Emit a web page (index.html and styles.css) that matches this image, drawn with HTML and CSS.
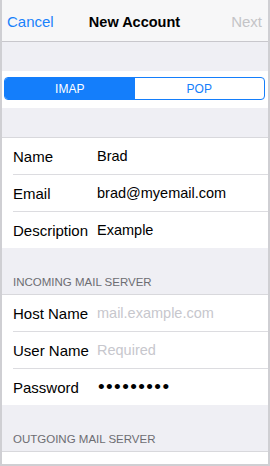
FILE: index.html
```html
<!DOCTYPE html>
<html lang="en-US">
<head>
	<meta charset="utf-8">
	<meta name="viewport" content="width=device-width, initial-scale=1.0">
	<link rel="stylesheet" href="styles.css">
</head>
<body>
	<div class="screen">
		<div class="navbar">
			<span class="nav-btn cancel">Cancel</span>
			<span class="nav-title">New Account</span>
			<span class="nav-btn next">Next</span>
		</div>

		<div class="spacer"></div>
		<div class="seg-band">
			<div class="segmented">
				<span class="seg active">IMAP</span>
				<span class="seg">POP</span>
			</div>
		</div>
		<div class="spacer"></div>

		<div class="group">
			<div class="row"><span class="label">Name</span><span class="value">Brad</span></div>
			<div class="row"><span class="label">Email</span><span class="value">brad@myemail.com</span></div>
			<div class="row"><span class="label">Description</span><span class="value">Example</span></div>
		</div>

		<div class="header">Incoming Mail Server</div>
		<div class="group">
			<div class="row"><span class="label">Host Name</span><span class="value placeholder">mail.example.com</span></div>
			<div class="row"><span class="label">User Name</span><span class="value placeholder">Required</span></div>
			<div class="row"><span class="label">Password</span><span class="value dots">&bull;&bull;&bull;&bull;&bull;&bull;&bull;&bull;&bull;</span></div>
		</div>

		<div class="header">Outgoing Mail Server</div>
		<div class="group">
			<div class="row"></div>
		</div>
	</div>
</body>
</html>
```

FILE: styles.css
```css
html, body {
	margin: 0;
	padding: 0;
}
body {
	font-family: "Liberation Sans", Arial, sans-serif;
	background: #fff;
}
.screen {
	width: 270px;
	height: 466px;
	box-sizing: border-box;
	border: 2px solid #cfcfd3;
	border-top: 0;
	background: #efeff4;
	overflow: hidden;
}
.navbar {
	height: 39px;
	background: #f7f7f8;
	border-bottom: 1px solid #c8c7cc;
	display: grid;
	grid-template-columns: 1fr auto 1fr;
	align-items: center;
	padding: 2px 6px 0 5px;
	font-size: 15px;
}
.nav-btn.cancel {
	color: #1a82fb;
}
.nav-btn.next {
	color: #c4c4c7;
	text-align: right;
}
.nav-title {
	font-weight: bold;
	font-size: 14.5px;
	color: #000;
}
.spacer {
	height: 29px;
}
.seg-band {
	background: #fff;
	padding: 6px 3px 8px 2px;
}
.segmented {
	display: flex;
	height: 23px;
	box-sizing: border-box;
	border: 1px solid #147efb;
	border-radius: 4px;
	overflow: hidden;
}
.seg {
	flex: 1;
	display: flex;
	align-items: center;
	justify-content: center;
	font-size: 12px;
	color: #147efb;
}
.seg.active {
	background: #147efb;
	color: #fff;
}
.group {
	background: #fff;
	border-top: 1px solid #d8d8dc;
	padding-left: 11px;
}
.row {
	height: 36px;
	display: flex;
	align-items: center;
	border-top: 1px solid #dcdce0;
}
.row:first-child {
	border-top: 0;
}
.label {
	width: 84px;
	font-size: 15px;
	color: #000;
}
.value {
	font-size: 14.5px;
	color: #000;
}
.placeholder {
	color: #c7c7cd;
}
.dots {
	font-size: 19px;
	letter-spacing: 1.4px;
	margin-left: 1px;
}
.header {
	height: 46px;
	box-sizing: border-box;
	display: flex;
	align-items: flex-end;
	padding: 0 0 6px 11px;
	font-size: 11.5px;
	color: #6d6d72;
	text-transform: uppercase;
}
```
